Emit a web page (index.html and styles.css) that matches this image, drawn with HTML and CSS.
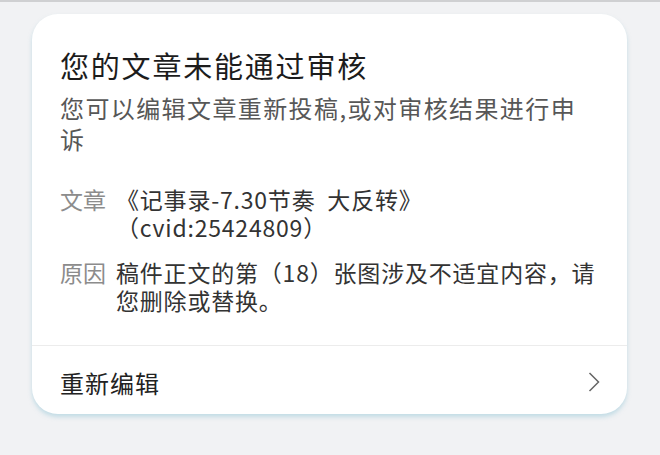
FILE: index.html
```html
<!DOCTYPE html>
<html lang="zh-CN">
<head>
  <meta charset="UTF-8" />
  <meta name="viewport" content="width=device-width, initial-scale=1.0" />
  <title>审核结果</title>
  <link rel="stylesheet" href="styles.css">
</head>
<body>
  <div class="card">
    <div class="card-head">
      <h1 class="title">您的文章未能通过审核</h1>
      <p class="subtitle">您可以编辑文章重新投稿,或对审核结果进行申诉</p>

      <div class="info">
        <div class="info-row">
          <span class="info-label">文章</span>
          <span class="info-value pre">《记事录-7.30节奏&nbsp; 大反转》
（cvid:25424809）</span>
        </div>
        <div class="info-row">
          <span class="info-label">原因</span>
          <span class="info-value">稿件正文的第（18）张图涉及不适宜内容，请您删除或替换。</span>
        </div>
      </div>
    </div>

    <div class="action">
      <span>重新编辑</span>
      <svg class="chevron" width="12" height="20" viewBox="0 0 12 20">
        <path d="M1.5 1 L10.5 10 L1.5 19" fill="none" stroke="#666" stroke-width="1.5" />
      </svg>
    </div>
  </div>
</body>
</html>
```

FILE: styles.css
```css
* {
  margin: 0;
  padding: 0;
  box-sizing: border-box;
}

body {
  font-family: 'Noto Sans CJK SC', 'Noto Sans', sans-serif;
  background-color: #f1f2f4;
  border-top: 2px solid #cfd0d2;
  height: 455px;
  overflow: hidden;
}

.card {
  margin: 12px 33px 0 32px;
  background: #fff;
  border-radius: 26px;
  box-shadow: 0 3px 4px rgba(150, 200, 215, 0.5);
}

.card-head {
  padding: 31px 28px 31px 28px;
  border-bottom: 1px solid #ececec;
}

.title {
  font-size: 29px;
  font-weight: 400;
  line-height: 40px;
  letter-spacing: 1.8px;
  color: #1c1c1c;
}

.subtitle {
  margin-top: 7px;
  font-size: 24px;
  line-height: 31px;
  letter-spacing: 1.4px;
  color: #575757;
}

.info {
  margin-top: 31px;
  display: flex;
  flex-direction: column;
  gap: 17px;
}

.info-row {
  display: flex;
  gap: 10px;
  font-size: 23px;
  line-height: 28px;
}

.info-label {
  flex: none;
  color: #8c8c8c;
}

.info-value {
  color: #333;
  letter-spacing: 0.8px;
}

.info-value.pre {
  white-space: pre-line;
}

.action {
  display: flex;
  align-items: center;
  justify-content: space-between;
  height: 68px;
  padding: 4px 27px 0 28px;
  font-size: 24px;
  letter-spacing: 1px;
  color: #222;
}

.chevron {
  display: block;
}
```
